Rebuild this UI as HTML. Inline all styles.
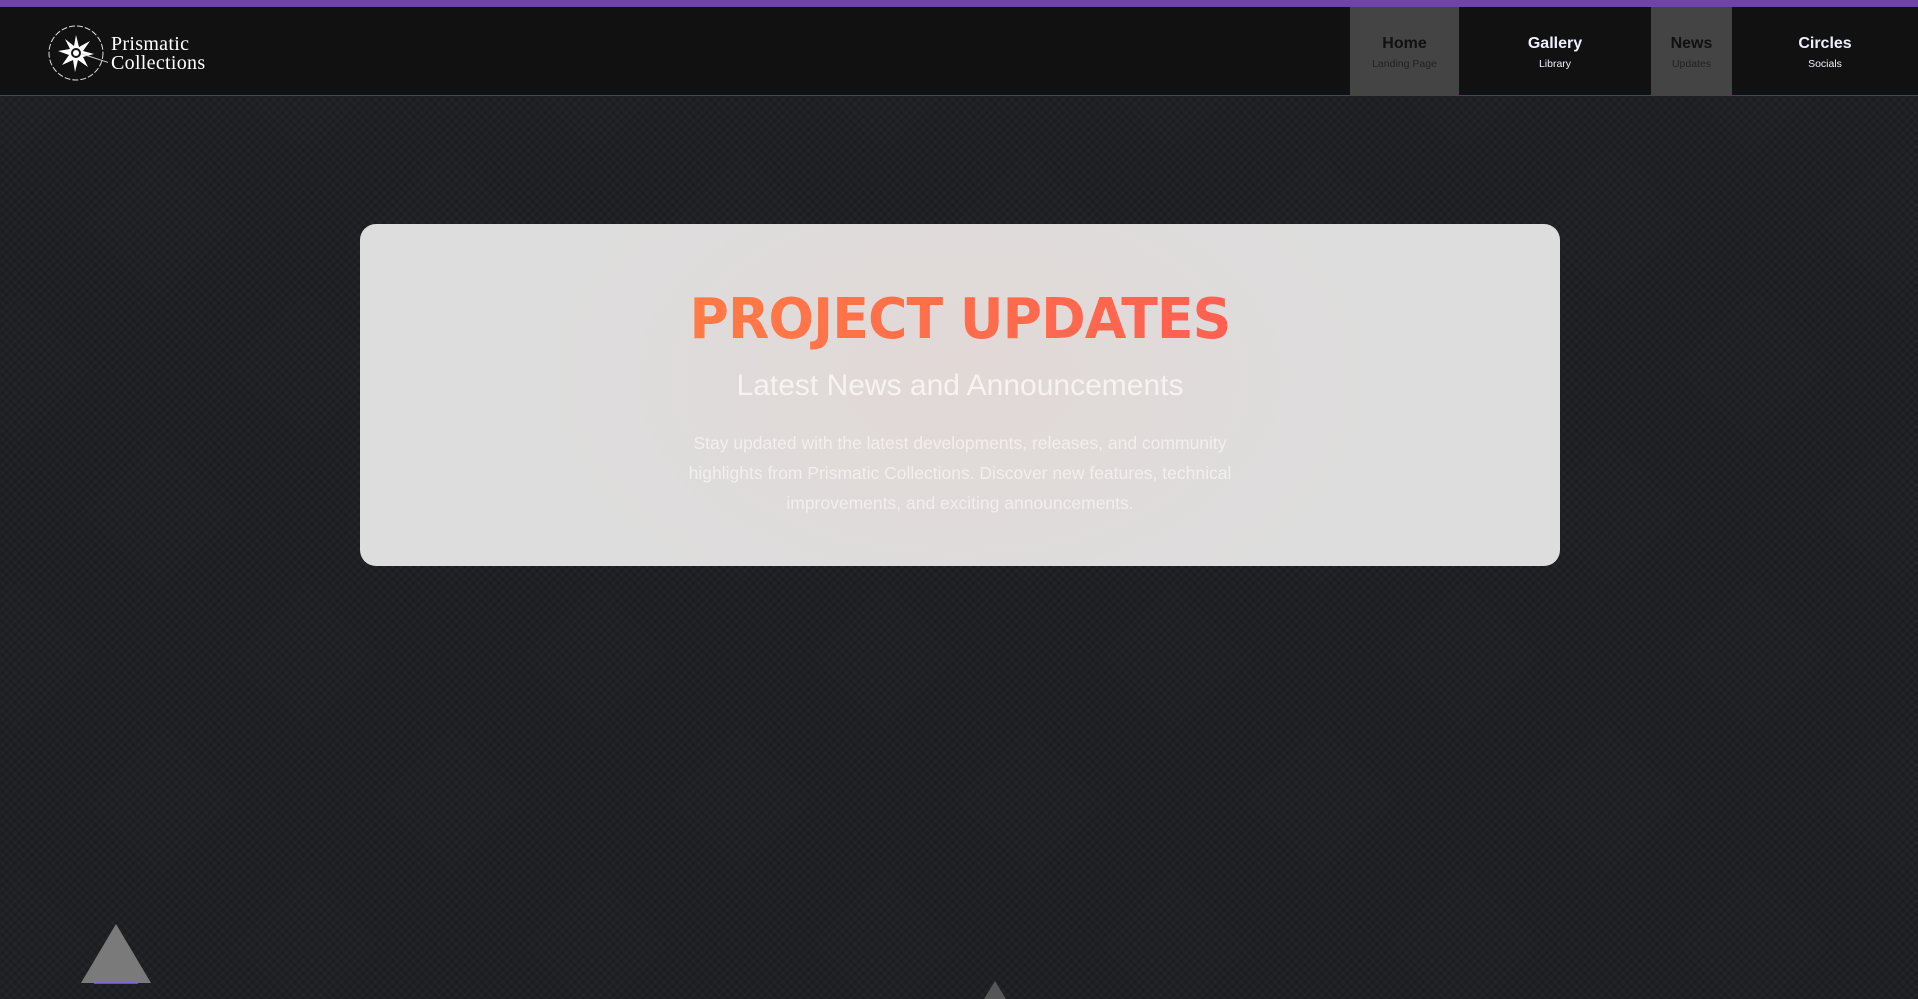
<!DOCTYPE html>
<html><head><meta charset="utf-8"><style>
*{margin:0;padding:0;box-sizing:border-box}
html,body{width:1918px;height:999px;overflow:hidden}
body{background:#1f2024;font-family:"Liberation Sans","DejaVu Sans",sans-serif;position:relative;
background-image:repeating-linear-gradient(45deg,rgba(255,255,255,0.018) 0 3px,transparent 3px 6px),repeating-linear-gradient(-45deg,rgba(0,0,0,0.12) 0 3px,transparent 3px 6px);}
.top{position:absolute;left:0;top:0;width:1918px;height:7px;background:#6f44a8}
nav{position:absolute;left:0;top:7px;width:1918px;height:89px;background:#111;border-bottom:1px solid #0f5d66}
.logo{position:absolute;left:48px;top:16px}
.lt{position:absolute;left:111px;top:28px;color:#fff;font-family:"Liberation Serif",serif;font-size:20px;line-height:19px;letter-spacing:0.3px}
.item{position:absolute;top:0;height:89px;text-align:center}
.item b{display:block;margin-top:28px;font-size:16px;font-weight:bold}
.item s{display:block;text-decoration:none;font-size:10.5px;margin-top:5px}
.card{position:absolute;left:360px;top:224px;width:1200px;height:342px;border-radius:16px;background:radial-gradient(ellipse 420px 260px at 50% 45%,#e2d8d6,#dddddd)}
h1{position:absolute;left:0;width:1200px;top:63px;text-align:center;font-size:56px;font-weight:900;letter-spacing:-1px;font-family:"DejaVu Sans",sans-serif;transform:scaleX(0.96)}
h1 span{background:linear-gradient(90deg,#ff7a45,#ff6052);-webkit-background-clip:text;color:transparent}
h2{position:absolute;left:0;width:1200px;top:145px;text-align:center;font-size:30px;font-weight:normal;color:#f7f3f3}
p{position:absolute;left:320px;width:560px;top:204px;text-align:center;font-size:17.5px;line-height:30px;color:#f3efef}
</style></head><body>
<div class="top"></div>
<nav>
<svg class="logo" width="60" height="60" viewBox="0 0 60 60">
<circle cx="28" cy="30" r="27" fill="none" stroke="#ddd" stroke-width="1" stroke-dasharray="6 2"/>
<path d="M28 12 L31 24 L42 18 L35 28 L46 31 L35 34 L40 44 L30 37 L27 49 L25 37 L14 42 L21 32 L10 28 L22 26 L17 16 L26 23 Z" fill="#fff"/>
<circle cx="28" cy="30" r="5" fill="#111"/><circle cx="28" cy="30" r="3" fill="#fff"/>
<line x1="34" y1="31" x2="62" y2="40" stroke="#ccc" stroke-width="1"/>
</svg>
<div class="lt">Prismatic<br>Collections</div>
<div class="item" style="left:1350px;width:109px;background:#444;color:#111"><b>Home</b><s style="color:#222">Landing Page</s></div>
<div class="item" style="left:1459px;width:192px;color:#eef"><b>Gallery</b><s>Library</s></div>
<div class="item" style="left:1651px;width:81px;background:#444;color:#111"><b>News</b><s style="color:#222">Updates</s></div>
<div class="item" style="left:1732px;width:186px;color:#eef"><b>Circles</b><s>Socials</s></div>
</nav>
<div class="card">
<h1><span>PROJECT UPDATES</span></h1>
<h2>Latest News and Announcements</h2>
<p>Stay updated with the latest developments, releases, and community highlights from Prismatic Collections. Discover new features, technical improvements, and exciting announcements.</p>
</div>
<svg style="position:absolute;left:80px;top:923px" width="72" height="62"><polygon points="36,1 71,60 1,60" fill="#7a7a7a"/><line x1="14" y1="60" x2="58" y2="60" stroke="#8b5cf6" stroke-width="1.5"/></svg>
<svg style="position:absolute;left:984px;top:981px" width="22" height="18"><polygon points="11,0 22,18 0,18" fill="#555"/></svg>
</body></html>
